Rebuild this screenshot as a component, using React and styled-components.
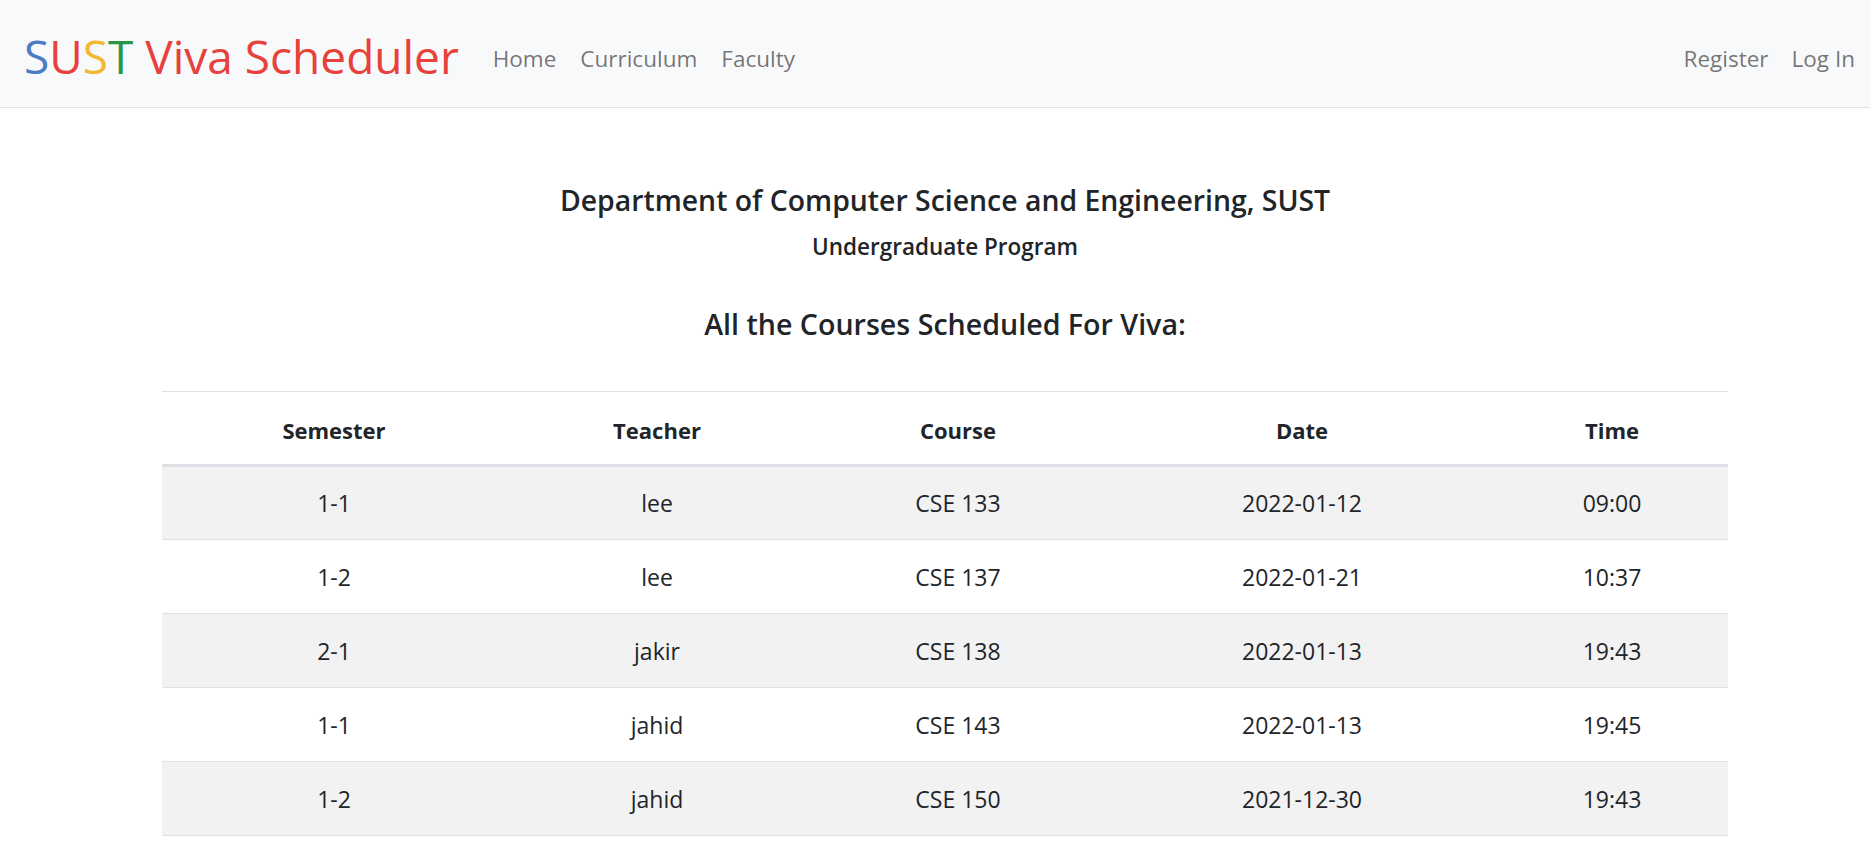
import React from "react";
import styled, { createGlobalStyle } from "styled-components";

const rows = [
  { semester: "1-1", teacher: "lee", course: "CSE 133", date: "2022-01-12", time: "09:00" },
  { semester: "1-2", teacher: "lee", course: "CSE 137", date: "2022-01-21", time: "10:37" },
  { semester: "2-1", teacher: "jakir", course: "CSE 138", date: "2022-01-13", time: "19:43" },
  { semester: "1-1", teacher: "jahid", course: "CSE 143", date: "2022-01-13", time: "19:45" },
  { semester: "1-2", teacher: "jahid", course: "CSE 150", date: "2021-12-30", time: "19:43" },
];

const columns = [
  { key: "semester", label: "Semester", width: 344 },
  { key: "teacher", label: "Teacher", width: 302 },
  { key: "course", label: "Course", width: 300 },
  { key: "date", label: "Date", width: 388 },
  { key: "time", label: "Time", width: 232 },
];

export default function App() {
  return (
    <>
      <GlobalStyle />
      <Navbar>
        <Brand href="#">
          <Letter color="#4a7cc4">S</Letter>
          <Letter color="#e8403a">U</Letter>
          <Letter color="#f4b731">S</Letter>
          <Letter color="#2b9447">T</Letter> Viva Scheduler
        </Brand>
        <NavList>
          <NavLink href="#">Home</NavLink>
          <NavLink href="#">Curriculum</NavLink>
          <NavLink href="#">Faculty</NavLink>
        </NavList>
        <NavList $right>
          <NavLink href="#">Register</NavLink>
          <NavLink href="#">Log In</NavLink>
        </NavList>
      </Navbar>
      <Main>
        <DeptTitle>Department of Computer Science and Engineering, SUST</DeptTitle>
        <ProgramTitle>Undergraduate Program</ProgramTitle>
        <ListTitle>All the Courses Scheduled For Viva:</ListTitle>
        <Table>
          <colgroup>
            {columns.map((c) => (
              <col key={c.key} style={{ width: c.width }} />
            ))}
          </colgroup>
          <thead>
            <tr>
              {columns.map((c) => (
                <Th key={c.key}>{c.label}</Th>
              ))}
            </tr>
          </thead>
          <tbody>
            {rows.map((row, index) => (
              <Row key={index} $striped={index % 2 === 0}>
                {columns.map((c) => (
                  <Td key={c.key}>{row[c.key]}</Td>
                ))}
              </Row>
            ))}
          </tbody>
        </Table>
      </Main>
    </>
  );
}

const GlobalStyle = createGlobalStyle`
  * {
    box-sizing: border-box;
  }
  body {
    margin: 0;
    background: #fff;
    color: #212529;
    font-family: "Open Sans", "Noto Sans", sans-serif;
  }
`;

const Navbar = styled.nav`
  display: flex;
  align-items: center;
  height: 108px;
  padding: 8px 15px 0 24px;
  background: #f8f9fa;
  border-bottom: 1px solid #dee2e6;
`;

const Brand = styled.a`
  font-size: 46px;
  color: #e8403a;
  text-decoration: none;
  margin-right: 34px;
  white-space: nowrap;
  line-height: 1;
  margin-top: -4px;
`;

const Letter = styled.span`
  color: ${(p) => p.color};
`;

const NavList = styled.div`
  display: flex;
  gap: ${(p) => (p.$right ? "23px" : "24px")};
  margin-left: ${(p) => (p.$right ? "auto" : "0")};
  padding-top: 4px;
`;

const NavLink = styled.a`
  font-size: 22.5px;
  color: rgba(0, 0, 0, 0.55);
  text-decoration: none;
  white-space: nowrap;
  line-height: 1;
`;

const Main = styled.main`
  width: 1566px;
  margin-left: 162px;
  padding-top: 75px;
  text-align: center;
`;

const DeptTitle = styled.h4`
  margin: 0;
  font-size: 28.4px;
  font-weight: 600;
  line-height: 35px;
`;

const ProgramTitle = styled.h6`
  margin: 15px 0 0;
  font-size: 22.5px;
  font-weight: 600;
  line-height: 27px;
`;

const ListTitle = styled.h4`
  margin: 46px 0 0;
  font-size: 28.6px;
  font-weight: 600;
  line-height: 35px;
`;

const Table = styled.table`
  width: 100%;
  margin-top: 50px;
  border-collapse: collapse;
  table-layout: fixed;
  border-top: 1px solid #dee2e6;
  font-size: 23px;
`;

const Th = styled.th`
  height: 74px;
  padding: 4px 0 0;
  font-size: 22px;
  font-weight: 700;
  text-align: center;
  vertical-align: middle;
  border-bottom: 3px solid #dee2e6;
`;

const Row = styled.tr`
  background: ${(p) => (p.$striped ? "#f2f2f2" : "#fff")};
`;

const Td = styled.td`
  height: 74px;
  padding: 0;
  text-align: center;
  vertical-align: middle;
  border-bottom: 1px solid #dee2e6;
`;
